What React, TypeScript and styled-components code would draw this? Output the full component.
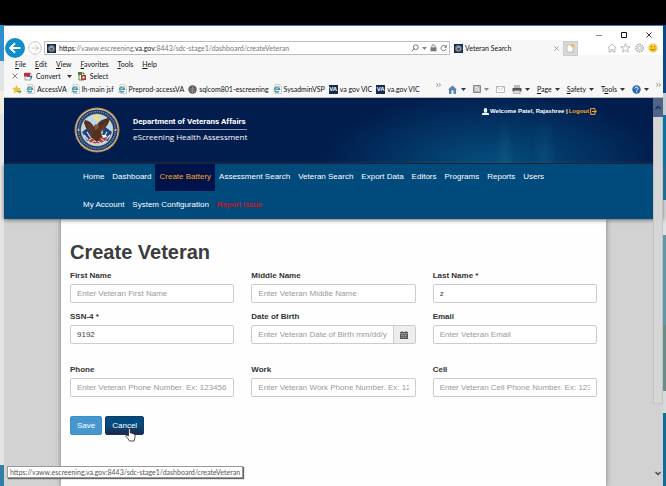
import React from "react";
import styled, { createGlobalStyle, css } from "styled-components";

const GlobalStyle = createGlobalStyle`
  *, *::before, *::after { box-sizing: border-box; }
  html, body { margin: 0; padding: 0; background: #000; }
  body { font-family: "Liberation Sans", Arial, sans-serif; font-size: 8px; line-height: 12px; color: #333; }
  button, input { font: inherit; }
  svg { display: block; flex: none; }
`;

const ui = css`
  font-family: Lato, "Noto Sans", sans-serif;
  font-size: 7px;
  line-height: 12px;
  color: #111;
`;

const Screen = styled.div`
  min-height: 100vh;
  padding-top: 25px;
  display: flex;
`;

const DesktopEdge = styled.div<{ $side: "left" | "right" }>`
  flex: none;
  width: ${(p) => (p.$side === "left" ? 4 : 3)}px;
  background: ${(p) =>
    p.$side === "left"
      ? "linear-gradient(#2b8fd0 0 36px, #dfe3e6 36px 66px, #f1efdc 66px 88px, #e4e4e6 88px 440px, #2f7fa6 440px)"
      : "linear-gradient(#0a4a8c 0 68px, #c3ccd4 68px 90px, #0873a8 90px 175px, #dfe3e6 175px 210px, #5d9aa5 210px 300px, #6b8b8b 300px 366px, #d5dadb 366px 388px, #0b6e94 388px)"};
`;

const Window = styled.div`
  flex: 1;
  min-width: 0;
  display: flex;
  flex-direction: column;
  border-top: 1px solid #3579b5;
  background: #f7f7f7;
`;

const TitleBar = styled.div`
  display: flex;
  justify-content: flex-end;
  height: 12px;
  padding-top: 3px;
  padding-right: 8px;
  gap: 13px;
  background: #fff;
`;

const BareButton = styled.button`
  ${ui}
  display: inline-flex;
  align-items: center;
  gap: 3px;
  padding: 0;
  border: 0;
  background: none;
  white-space: nowrap;
  u { text-underline-offset: 1px; }
`;

const WindowButton = styled(BareButton)`
  width: 12px;
  height: 12px;
  justify-content: center;
`;

const AddressRow = styled.form`
  display: flex;
  align-items: center;
  height: 20px;
  margin: 0;
  padding: 0 5px 0 1px;
  background: linear-gradient(#fff 17px, #f7f7f7 17px);
`;

const AddressBox = styled.div`
  display: flex;
  align-items: center;
  flex: 1;
  height: 14px;
  margin-left: 2px;
  padding: 0 2px;
  gap: 3px;
  border: 1px solid #bdbdbd;
  background: #fff;
`;

const UrlText = styled.a`
  ${ui}
  flex: 1;
  overflow: hidden;
  color: #777;
  text-decoration: none;
  white-space: nowrap;
  b { font-weight: 400; color: #111; }
`;

const Tab = styled.div`
  ${ui}
  display: flex;
  align-items: center;
  gap: 2px;
  width: 111px;
  height: 16px;
  margin-left: 2px;
  padding: 0 4px 0 2px;
  background: #f7f7f7;
  span { flex: 1; }
`;

const NewTab = styled.button`
  display: grid;
  place-items: center;
  width: 15px;
  height: 15px;
  padding: 0;
  border: 1px solid #ccc;
  background: #d9d9d9;
`;

const Tools = styled.div`
  display: flex;
  justify-content: flex-end;
  gap: 3px;
  width: 80px;
`;

const MenuBar = styled.nav`
  display: flex;
  gap: 9px;
  height: 11px;
  padding-left: 11px;
  align-items: center;
`;

const ConvertBar = styled.div`
  display: flex;
  align-items: center;
  height: 14px;
  padding-left: 8px;
  gap: 6px;
`;

const FavoritesBar = styled.div`
  display: flex;
  align-items: center;
  justify-content: space-between;
  height: 15px;
  padding: 0 2px 2px 8px;
  border-bottom: 1px solid #bbb;
`;

const Group = styled.div<{ $gap: number }>`
  display: flex;
  align-items: center;
  gap: ${(p) => p.$gap}px;
`;

const Favorite = styled.a`
  ${ui}
  display: flex;
  align-items: center;
  gap: 2px;
  text-decoration: none;
  white-space: nowrap;
`;

const VaBadge = styled.i`
  width: 9px;
  height: 9px;
  background: #112e51;
  color: #fff;
  font: 700 6px/9px "Liberation Sans", sans-serif;
  text-align: center;
`;

const Page = styled.div`
  position: relative;
  flex: 1;
  display: flex;
  flex-direction: column;
  background: #d2d2d2;
`;

const Banner = styled.header`
  display: flex;
  justify-content: space-between;
  align-items: flex-start;
  height: 66px;
  padding: 9px 66px 0 70px;
  border-bottom: 1px solid #071126;
  background:
    radial-gradient(ellipse 10px 45px at 76% 100%, rgba(30, 110, 150, 0.3), transparent),
    radial-gradient(ellipse 12px 50px at 82% 95%, rgba(20, 100, 150, 0.3), transparent),
    radial-gradient(ellipse 170px 75px at 74% 105%, #045080, transparent),
    #011d4d;
`;

const Brand = styled.div`
  display: flex;
  gap: 13px;
`;

const BrandText = styled.div`
  padding-top: 9px;
  font-family: "Open Sans", sans-serif;
  font-size: 8px;
  line-height: 14px;
  color: #fff;
  white-space: nowrap;
  strong, span { display: block; }
  strong { border-bottom: 1px solid #8c9bb5; font-family: Roboto, sans-serif; line-height: 12px; padding-bottom: 1px; }
`;

const UserInfo = styled.div`
  display: flex;
  align-items: center;
  gap: 1px;
  height: 8px;
  color: #fff;
  font-size: 6px;
  line-height: 8px;
  font-weight: 700;
  white-space: nowrap;
  a { color: #f5a623; text-decoration: none; }
`;

const NavBar = styled.nav`
  position: relative;
  display: flex;
  flex-wrap: wrap;
  height: 55px;
  padding: 0 75px;
  background: #004a7c;
  box-shadow: 0 1px 4px #6b6460;
`;

const NavLink = styled.a<{ $tone?: "active" | "alert" }>`
  height: 27px;
  padding: 0 4px;
  line-height: 26px;
  color: ${(p) => (p.$tone === "active" ? "#f5a623" : p.$tone === "alert" ? "#f00" : "#fff")};
  background: ${(p) => (p.$tone === "active" ? "#00124a" : "transparent")};
  text-decoration: none;
  white-space: nowrap;
`;

const Break = styled.div`
  flex-basis: 100%;
`;

const Panel = styled.main`
  flex: 1;
  margin: 0 57px;
  padding: 21px 9px 0;
  background: #fefefe;
  box-shadow: 0 0 5px #777;
`;

const Title = styled.h1`
  margin: 0 0 4px;
  font-size: 20px;
  line-height: 25px;
  color: #3a3d3d;
`;

const Fields = styled.form`
  display: grid;
  grid-template-columns: repeat(3, 1fr);
  column-gap: 17px;
`;

const Field = styled.label<{ $wide?: boolean }>`
  display: block;
  min-width: 0;
  margin-bottom: ${(p) => (p.$wide ? 19 : 7)}px;
  font-weight: 700;
  span { display: block; height: 15px; line-height: 14px; }
`;

const InputRow = styled.div`
  display: flex;
  height: 19px;
  border: 1px solid #ccc;
  border-radius: 2px;
  background: #fff;
  overflow: hidden;
`;

const TextInput = styled.input`
  flex: 1;
  min-width: 0;
  margin: 0 6px;
  padding: 0;
  border: 0;
  outline: 0;
  background: none;
  color: #444;
  font-weight: 400;
  &::placeholder { color: #999; opacity: 1; }
`;

const CalendarButton = styled.button`
  display: grid;
  place-items: center;
  width: 22px;
  padding: 0;
  border: 0;
  border-left: 1px solid #ccc;
  background: #eee;
`;

const Actions = styled.div`
  grid-column: 1 / -1;
  display: flex;
  gap: 3px;
`;

const ActionButton = styled.button<{ $primary?: boolean }>`
  height: 19px;
  padding: 0 6px;
  border: 1px solid ${(p) => (p.$primary ? "#3d8fc6" : "#17375c")};
  border-radius: 2px;
  background: ${(p) => (p.$primary ? "#4697d0" : "linear-gradient(#004c80 45%, #20294a)")};
  color: #fff;
`;

const Cursor = styled.svg`
  position: absolute;
  left: 121px;
  top: 330px;
`;

const ScrollBar = styled.div`
  position: absolute;
  top: 0;
  right: 0;
  bottom: 0;
  width: 10px;
  display: flex;
  flex-direction: column;
  align-items: center;
  background: #d6d6d6;
`;

const ScrollUp = styled.button`
  display: grid;
  place-items: center;
  width: 10px;
  height: 19px;
  padding: 0;
  border: 0;
  background: #506489;
`;

const ScrollThumb = styled.div`
  flex: 1;
  width: 10px;
  border: 1px solid #c2c2c2;
  border-top: 0;
`;

const ScrollDown = styled.button`
  display: grid;
  place-items: center;
  width: 10px;
  height: 82px;
  padding: 56px 0 0;
  border: 0;
  background: #d2d2d2;
`;

const StatusTip = styled.div`
  ${ui}
  position: absolute;
  left: 3px;
  bottom: 8px;
  padding: 0 2px;
  line-height: 10px;
  color: #555;
  border: 1px solid #999;
  background: #fff;
  box-shadow: 1px 1px 1px #666;
  white-space: nowrap;
`;

const Seal = ({ size }: { size: number }) => (
  <svg width={size} height={size} viewBox="0 0 46 46" aria-hidden="true">
    <circle cx="23" cy="23" r="22.5" fill="#b5804a" />
    <circle cx="23" cy="23" r="21.4" fill="#e3cda4" />
    <circle cx="23" cy="23" r="20.6" fill="#193a70" />
    <circle cx="23" cy="23" r="18.4" fill="none" stroke="#8b97a8" strokeWidth="1.5" strokeDasharray="1 1.1" />
    <circle cx="23" cy="23" r="16.3" fill="#d6b878" />
    <circle cx="23" cy="23" r="15.5" fill="#b9d9ee" />
    <path d="M8 25 16 19 19 34 13 34ZM38 25 30 19 27 34 34 34Z" fill="#25447a" />
    <path d="M10 28l6 7M13 25l5 8M36 28l-6 7M33 25l-5 8" stroke="#dce4ec" strokeWidth="1.2" />
    <path d="M14 33q5-6 9-1 6-5 10 0-5 5-10 4-6 1-9-3Z" fill="#b33a38" />
    <path d="M15 33l4-2 3 4 4-4 4 3M17 36l5-3 5 3" stroke="#ece3dc" fill="none" />
    <path d="M11 13q6 1 9 7l3-2q2-5 11-7l2 1-2 5-3 4-4 4 1 5-5 5-5-4-1-5-5-5-2-5Z" fill="#55301f" />
    <path d="M14 17l6 7M14 20l5 6M32 15l-7 9M31 19l-5 6" stroke="#7e4a30" strokeWidth=".8" />
    <path d="M20 18q3-2 5 1l-1 3-3 1Z" fill="#86553a" />
    <path d="m28 28 4 0 1 2-4 1Z" fill="#fff" />
    <path d="m23 6 1 3 3-1-2 3 2 2-3 0-1 2-1-2-3 0 2-2-2-3 3 1Z" fill="#f0dc79" />
    <circle cx="4.5" cy="23" r="1" fill="#dfcf9a" />
    <circle cx="41.5" cy="23" r="1" fill="#dfcf9a" />
  </svg>
);

const SiteIcon = () => (
  <svg width="9" height="9" viewBox="0 0 9 9" aria-hidden="true">
    <rect width="9" height="9" fill="#0c2d5c" />
    <circle cx="4.5" cy="4.5" r="3.1" fill="#a9a194" stroke="#54708e" />
    <path d="M2.5 3.5 4.5 4.5 6.5 3.5 5 6.5H4Z" fill="#5d3526" />
  </svg>
);

const IePage = () => (
  <svg width="9" height="10" viewBox="0 0 9 10" aria-hidden="true">
    <path d="M2 .5h4.5l2 2v7H2Z" fill="#fff" stroke="#bbb" strokeWidth=".7" />
    <path d="M6 7A2.5 2.5 0 1 1 6.5 5.3H1.5" fill="none" stroke="#2a9ad7" strokeWidth="1.4" />
    <path d="M.5 8.5Q1 5 7 2" fill="none" stroke="#e3bb35" />
  </svg>
);

const Caret = ({ color = "#333" }: { color?: string }) => (
  <svg width="5" height="3" viewBox="0 0 5 3" aria-hidden="true"><path d="M0 0h5L2.5 3Z" fill={color} /></svg>
);

const Cross = ({ size, color }: { size: number; color: string }) => (
  <svg width={size} height={size} viewBox="0 0 6 6" aria-hidden="true">
    <path d="m.5.5 5 5m0-5-5 5" stroke={color} strokeWidth=".9" />
  </svg>
);

const ChevronMark = styled.svg`
  align-self: flex-start;
`;

const Chevrons = () => (
  <ChevronMark width="5" height="4" viewBox="0 0 5 4" aria-hidden="true">
    <path d="m.5.3 1.5 1.7-1.5 1.7M3 .3 4.5 2 3 3.7" fill="none" stroke="#666" strokeWidth=".7" />
  </ChevronMark>
);

const favorites: { label: string; icon: "ie" | "va" | "globe" }[] = [
  { label: "AccessVA", icon: "ie" },
  { label: "lh-main jsf", icon: "ie" },
  { label: "Preprod-accessVA", icon: "ie" },
  { label: "sqlcom801-escreening", icon: "globe" },
  { label: "SysadminVSP", icon: "ie" },
  { label: "va gov VIC", icon: "va" },
  { label: "va.gov VIC", icon: "va" },
];

const menus = ["File", "Edit", "View", "Favorites", "Tools", "Help"];

const firstNav = [
  "Home", "Dashboard", "Create Battery", "Assessment Search", "Veteran Search",
  "Export Data", "Editors", "Programs", "Reports", "Users",
];

const fields = [
  { label: "First Name", hint: "Enter Veteran First Name" },
  { label: "Middle Name", hint: "Enter Veteran Middle Name" },
  { label: "Last Name *", value: "z" },
  { label: "SSN-4 *", value: "9192", wide: true },
  { label: "Date of Birth", hint: "Enter Veteran Date of Birth mm/dd/yyyy", calendar: true, wide: true },
  { label: "Email", hint: "Enter Veteran Email", wide: true },
  { label: "Phone", hint: "Enter Veteran Phone Number. Ex: 1234567890", wide: true },
  { label: "Work", hint: "Enter Veteran Work Phone Number. Ex: 1234567890", wide: true },
  { label: "Cell", hint: "Enter Veteran Cell Phone Number. Ex: 1234567890", wide: true },
];

function BrowserChrome() {
  return (
    <>
      <TitleBar>
        <WindowButton aria-label="Minimize">
          <svg width="6" height="6"><path d="M0 3.5h6" stroke="#888" /></svg>
        </WindowButton>
        <WindowButton aria-label="Maximize">
          <svg width="7" height="7"><path d="M.5.5h5v5h-5Z" fill="none" stroke="#111" /></svg>
        </WindowButton>
        <WindowButton aria-label="Close"><Cross size={6} color="#222" /></WindowButton>
      </TitleBar>
      <AddressRow onSubmit={(e) => e.preventDefault()}>
        <BareButton type="button" aria-label="Back">
          <svg width="20" height="20" viewBox="0 0 20 20">
            <circle cx="10" cy="10" r="10" fill="#0f8fc9" />
            <path d="M15.5 10H5.5M10 5.2 5.2 10l4.8 4.8" fill="none" stroke="#fff" strokeWidth="2" />
          </svg>
          <svg width="14" height="14" viewBox="0 0 14 14">
            <circle cx="7" cy="7" r="6.3" fill="#fff" stroke="#c4c4c4" />
            <path d="M3.5 7h7M7.5 4l3 3-3 3" fill="none" stroke="#c4c4c4" />
          </svg>
        </BareButton>
        <AddressBox>
          <SiteIcon />
          <UrlText href="#"><b>https</b>://vaww.escreening.<b>va.gov</b>:8443/sdc-stage1/dashboard/createVeteran</UrlText>
          <svg width="8" height="8" viewBox="0 0 8 8"><path d="M3.2 4.8.8 7.3" stroke="#777" /><circle cx="4.8" cy="3.2" r="2.4" fill="none" stroke="#777" /></svg>
          <Caret color="#888" />
          <svg width="7" height="8" viewBox="0 0 7 8"><path d="M.5 3.3h6v4h-6Z" fill="#777" /><path d="M1.8 3.5v-1a1.7 1.7 0 0 1 3.4 0v1" fill="none" stroke="#777" /></svg>
          <svg width="7" height="8" viewBox="0 0 7 8"><path d="M5.8 2.6A2.6 2.6 0 1 0 6.1 5" fill="none" stroke="#777" /><path d="M6.8.8v3H4Z" fill="#777" /></svg>
        </AddressBox>
        <Tab>
          <SiteIcon />
          <span>Veteran Search</span>
          <BareButton type="button" aria-label="Close tab"><Cross size={5} color="#888" /></BareButton>
        </Tab>
        <NewTab type="button" aria-label="New tab">
          <svg width="9" height="10" viewBox="0 0 9 10"><path d="M1 2h4l2 2v5H1Z" fill="#fff" stroke="#aaa" strokeWidth=".7" /><path d="m6.5 0 .6 1.6L9 1.5 7.7 2.8 8.5 4.5 6.5 3.6 5 4.5l.4-1.8L4 1.5h1.8Z" fill="#f0b64a" /></svg>
        </NewTab>
        <Tools>
          <svg width="10" height="10" viewBox="0 0 10 10"><path d="M.7 5 5 1l4.3 4M2 4.5V9h2V6.5h2V9h2V4.5" fill="none" stroke="#aaa" strokeWidth=".8" /></svg>
          <svg width="11" height="10" viewBox="0 0 11 10"><path d="m5.5.7 1.3 3 3.3.2-2.6 2 .9 3.2-2.9-1.8-2.9 1.8.9-3.2-2.6-2 3.3-.2Z" fill="none" stroke="#aaa" strokeWidth=".8" /></svg>
          <svg width="11" height="10" viewBox="0 0 11 10"><circle cx="5.5" cy="5" r="3.7" fill="none" stroke="#aaa" strokeWidth="1.4" strokeDasharray="1.7 .7" /><circle cx="5.5" cy="5" r="1.8" fill="none" stroke="#aaa" strokeWidth=".8" /></svg>
          <svg width="10" height="10" viewBox="0 0 10 10"><circle cx="5" cy="5" r="4.5" fill="#f8cb3a" /><path d="M3.3 3v1.3M6.7 3v1.3M2.6 6q2.4 2.4 4.8 0" fill="none" stroke="#7b5a16" strokeWidth=".8" /></svg>
        </Tools>
      </AddressRow>
      <MenuBar>
        {menus.map((m) => (
          <BareButton key={m}><span><u>{m[0]}</u>{m.slice(1)}</span></BareButton>
        ))}
      </MenuBar>
      <ConvertBar>
        <BareButton aria-label="Close toolbar"><Cross size={6} color="#777" /></BareButton>
        <BareButton>
          <svg width="9" height="9" viewBox="0 0 9 9"><path d="M1 1h6v7H1Z" fill="#eee" stroke="#888" strokeWidth=".7" /><path d="M0 1h6v3.5H0Z" fill="#c5293b" /><path d="M3 4.5h5L6.5 7" fill="none" stroke="#3b62a8" /></svg>
          Convert
        </BareButton>
        <Caret />
        <BareButton>
          <svg width="9" height="10" viewBox="0 0 9 10"><path d="M1 2h5v7H1Z" fill="#fff" stroke="#4e8a3c" /><path d="M0 1h4v3H0Z" fill="#4e7a2c" /><path d="M3 4h5v5H3Z" fill="#ab3b31" /><path d="M4.5 5.5h2v2h-2Z" fill="#fff" /></svg>
          Select
        </BareButton>
      </ConvertBar>
      <FavoritesBar>
        <Group $gap={4}>
          <svg width="10" height="9" viewBox="0 0 10 9"><path d="m4.5 0 1.3 2.8 3.2.3-2.4 2 .8 3.4-2.9-1.8L1.6 8.5l.8-3.4L0 3.1l3.2-.3Z" fill="#f5bd35" /><path d="M5 6.5h4M7.3 4.8 9.2 6.5 7.3 8.2" fill="none" stroke="#4eaa4a" /></svg>
          {favorites.map((f) => (
            <Favorite href="#" key={f.label}>
              {f.icon === "ie" && <IePage />}
              {f.icon === "va" && <VaBadge>VA</VaBadge>}
              {f.icon === "globe" && (
                <svg width="9" height="9" viewBox="0 0 9 9"><circle cx="4.5" cy="4.5" r="4.2" fill="#5d5b60" /><path d="M1.5 4h6M2 6.2h5M4.5 1v7" stroke="#b39a8d" strokeWidth=".7" /></svg>
              )}
              {f.label}
            </Favorite>
          ))}
        </Group>
        <Group $gap={7}>
          <Chevrons />
          <BareButton aria-label="Home page">
            <svg width="10" height="9" viewBox="0 0 10 9"><path d="M0 4.5 4.5.5 9 4.5H8V9H1V4.5Z" fill="#5b83b1" /><path d="M3.5 5.5h2V9h-2Z" fill="#fff" /></svg>
            <Caret />
          </BareButton>
          <BareButton aria-label="Feeds">
            <svg width="8" height="8" viewBox="0 0 8 8"><path d="M.5.5h7v7h-7Z" fill="#bbb" stroke="#888" /><path d="M2 2q4 0 4 4M2 4q2 0 2 2" fill="none" stroke="#fff" strokeWidth=".8" /></svg>
            <Caret color="#888" />
          </BareButton>
          <BareButton aria-label="Read mail">
            <svg width="9" height="7" viewBox="0 0 9 7"><path d="M.5.5h8v6h-8Z" fill="#fff" stroke="#aaa" strokeWidth=".8" /><path d="m1 1 3.5 3L8 1" fill="none" stroke="#c99" strokeWidth=".7" /></svg>
          </BareButton>
          <BareButton aria-label="Print">
            <svg width="10" height="9" viewBox="0 0 10 9"><path d="M2 0h6v3H2Z" fill="#bbb" /><path d="M.5 3h9v3.5h-9Z" fill="#555" /><path d="M2 5.5h6V9H2Z" fill="#ddd" stroke="#888" strokeWidth=".6" /></svg>
            <Caret />
          </BareButton>
          <BareButton><span><u>P</u>age</span><Caret /></BareButton>
          <BareButton><span><u>S</u>afety</span><Caret /></BareButton>
          <BareButton><span>T<u>o</u>ols</span><Caret /></BareButton>
          <BareButton aria-label="Help">
            <svg width="9" height="9" viewBox="0 0 9 9"><circle cx="4.5" cy="4.5" r="4.2" fill="#2c69b0" /><path d="M3 3.5q0-1.5 1.5-1.5T6 3.5 4.5 5.3M4.5 6.2v1" fill="none" stroke="#fff" /></svg>
            <Caret />
          </BareButton>
          <Chevrons />
        </Group>
      </FavoritesBar>
    </>
  );
}

export default function App() {
  return (
    <>
      <GlobalStyle />
      <Screen>
        <DesktopEdge $side="left" />
        <Window>
          <BrowserChrome />
          <Page>
            <Banner>
              <Brand>
                <Seal size={46} />
                <BrandText>
                  <strong>Department of Veterans Affairs</strong>
                  <span>eScreening Health Assessment</span>
                </BrandText>
              </Brand>
              <UserInfo>
                <svg width="7" height="7" viewBox="0 0 7 7"><ellipse cx="3.5" cy="2.2" rx="1.7" ry="2.2" fill="#fff" /><path d="M0 7V5.6L2.5 4.5h2L7 5.6V7Z" fill="#fff" /></svg>
                <span>Welcome Patel, Rajashree |</span>
                <a href="#">Logout</a>
                <svg width="7" height="7" viewBox="0 0 7 7"><path d="M5 1.8V.6H.6v5.8H5V5.2" fill="none" stroke="#f5a623" /><path d="M2 2.900h2.500V1.500l2.500 2-2.500 2V4.100H2Z" fill="#f5a623" /></svg>
              </UserInfo>
            </Banner>
            <NavBar>
              {firstNav.map((n) => (
                <NavLink href="#" key={n} $tone={n === "Create Battery" ? "active" : undefined}>{n}</NavLink>
              ))}
              <Break />
              <NavLink href="#">My Account</NavLink>
              <NavLink href="#">System Configuration</NavLink>
              <NavLink href="#" $tone="alert">Report Issue</NavLink>
            </NavBar>
            <Panel>
              <Title>Create Veteran</Title>
              <Fields onSubmit={(e) => e.preventDefault()}>
                {fields.map((f) => (
                  <Field key={f.label} $wide={f.wide}>
                    <span>{f.label}</span>
                    <InputRow>
                      <TextInput type="text" placeholder={f.hint} defaultValue={f.value} />
                      {f.calendar && (
                        <CalendarButton type="button" aria-label="Pick a date">
                          <svg width="8" height="8" viewBox="0 0 8 8"><path d="M0 1h1.5V0h1v1h3V0h1v1H8v7H0Z" fill="#555" /><path d="M0 2.7h8M1 4.3h6M1 6.2h6" stroke="#ddd" strokeWidth=".7" strokeDasharray="1.4 .5" /></svg>
                        </CalendarButton>
                      )}
                    </InputRow>
                  </Field>
                ))}
                <Actions>
                  <ActionButton type="submit" $primary>Save</ActionButton>
                  <ActionButton type="button">Cancel</ActionButton>
                </Actions>
              </Fields>
            </Panel>
            <ScrollBar>
              <ScrollUp aria-label="Scroll up">
                <svg width="6" height="5" viewBox="0 0 6 5"><path d="m.5 4 2.5-2.5L5.500 4" fill="none" stroke="#1c2d49" strokeWidth="1.3" /></svg>
              </ScrollUp>
              <ScrollThumb />
              <ScrollDown aria-label="Scroll down">
                <svg width="6" height="5" viewBox="0 0 6 5"><path d="m.5 1 2.5 2.5L5.500 1" fill="none" stroke="#444" strokeWidth="1.3" /></svg>
              </ScrollDown>
            </ScrollBar>
            <Cursor width="12" height="14" viewBox="0 0 12 14" aria-hidden="true">
              <path d="M3.5 8V1.5q0-1 .8-1t.9 1V5q1.6-.5 1.7.5 1.4-.4 1.6.6 1.5-.2 1.5 1v2.5L9 13H4.5Q3 10.5 1 8.5.5 7 2 7.2Z" fill="#fff" stroke="#222" strokeWidth=".8" />
            </Cursor>
            <StatusTip role="status">https://vaww.escreening.va.gov:8443/sdc-stage1/dashboard/createVeteran</StatusTip>
          </Page>
        </Window>
        <DesktopEdge $side="right" />
      </Screen>
    </>
  );
}
